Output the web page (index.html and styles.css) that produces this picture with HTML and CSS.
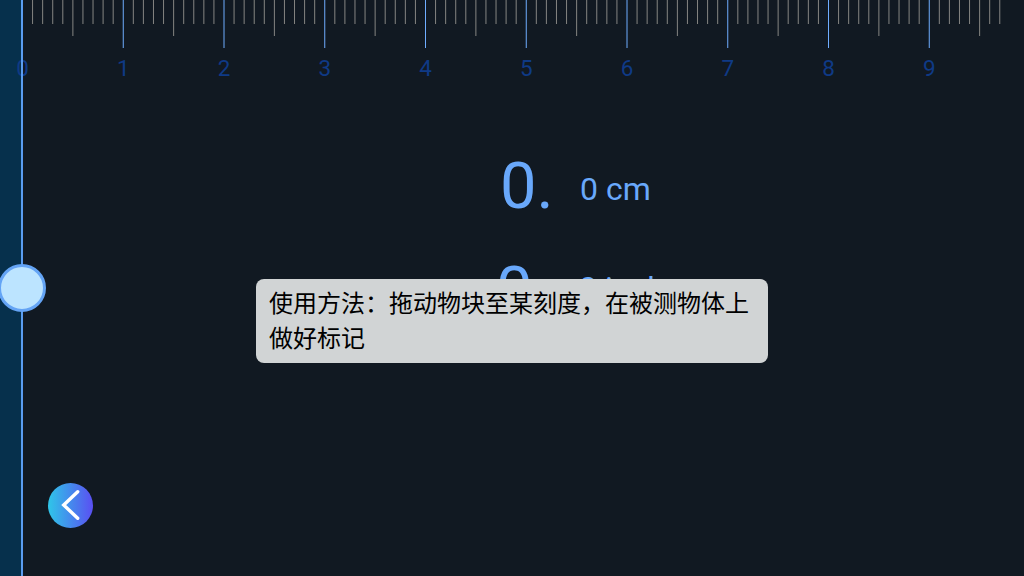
FILE: index.html
```html
<!DOCTYPE html>
<html lang="zh-CN">
<head>
    <meta charset="UTF-8">
    <meta name="viewport" content="width=device-width, initial-scale=1.0">
    <title>尺子</title>
    <link rel="stylesheet" href="styles.css">
</head>
<body>

<div class="app">
    <div class="marker-strip"></div>

    <svg class="ruler" id="ruler" width="1024" height="90" viewBox="0 0 1024 90"></svg>

    <div class="marker-line"></div>

    <div class="readouts">
        <div class="readout">
            <span class="readout-big">0.</span>
            <span class="readout-small">0 cm</span>
        </div>
        <div class="readout readout-inch">
            <span class="readout-big">0.</span>
            <span class="readout-small">0 inch</span>
        </div>
    </div>

    <div class="thumb"></div>

    <button class="back-button" type="button">
        <svg width="45" height="45" viewBox="0 0 45 45">
            <path d="M29.7 8.7 L15.7 22 L29.7 35.3" fill="none" stroke="#fff" stroke-width="3.4" stroke-linecap="round"/>
        </svg>
    </button>

    <div class="toast">使用方法：拖动物块至某刻度，在被测物体上做好标记</div>
</div>

<script>
    // ticks are drawn at fractional x, same as the 100.75px per cm of the scale
    const ruler = document.getElementById('ruler');
    const ns = 'http://www.w3.org/2000/svg';
    const startX = 22.5;
    const mmWidth = 10.075;

    for (let i = 1; i < 98; i++) {
        const x = startX + i * mmWidth;
        const line = document.createElementNS(ns, 'line');
        const isCm = i % 10 === 0;
        const isHalf = i % 5 === 0;
        line.setAttribute('x1', x);
        line.setAttribute('x2', x);
        line.setAttribute('y1', 0);
        line.setAttribute('y2', isCm ? 48 : isHalf ? 36 : 24);
        line.setAttribute('class', isCm ? 'tick tick-cm' : 'tick');
        ruler.appendChild(line);
    }

    for (let n = 0; n < 10; n++) {
        const label = document.createElementNS(ns, 'text');
        label.setAttribute('x', startX + 0.2 + n * mmWidth * 10);
        label.setAttribute('y', 76);
        label.setAttribute('class', 'tick-label');
        label.textContent = n;
        ruler.appendChild(label);
    }
</script>

</body>
</html>
```

FILE: styles.css
```css
* {
    box-sizing: border-box;
}
body {
    margin: 0;
    background: #111922;
    font-family: 'Roboto', 'Noto Sans CJK SC', sans-serif;
    overflow: hidden;
}
.app {
    position: relative;
    width: 1024px;
    height: 576px;
    overflow: hidden;
}
.marker-strip {
    position: absolute;
    left: 0;
    top: 0;
    width: 22px;
    height: 100%;
    background: #06304c;
}
.marker-line {
    position: absolute;
    left: 21px;
    top: 0;
    width: 2px;
    height: 100%;
    background: #5b9df0;
}
.ruler {
    display: block;
    position: relative;
}
.tick {
    stroke: #858582;
    stroke-width: 1;
}
.tick-cm {
    stroke: #6fadff;
}
.tick-label {
    fill: #0f3a86;
    font-size: 22.5px;
    text-anchor: middle;
}
.readouts {
    display: flex;
    flex-direction: column;
    gap: 8px;
    padding: 52px 0 0 500px;
    color: #69a8fb;
}
.readout {
    display: flex;
    align-items: flex-start;
    height: 96px;
}
.readout-big {
    width: 80px;
    font-size: 65px;
    line-height: 88px;
}
.readout-small {
    margin-top: 28px;
    font-size: 32px;
    line-height: 38px;
}
.readout-inch {
    margin-left: -4px;
}
.readout-inch .readout-big {
    width: 83px;
}
.readout-inch .readout-small {
    margin-top: 23px;
}
.thumb {
    position: absolute;
    left: -2px;
    top: 264px;
    width: 48px;
    height: 48px;
    border: 3px solid #64a4f5;
    border-radius: 50%;
    background: #bce4ff;
}
.back-button {
    position: absolute;
    left: 48px;
    top: 483px;
    width: 45px;
    height: 45px;
    padding: 0;
    border: none;
    border-radius: 50%;
    background: linear-gradient(90deg, #2fc6e8, #5a4ff2);
}
.back-button svg {
    display: block;
}
.toast {
    position: absolute;
    left: 256px;
    top: 279px;
    width: 512px;
    height: 84px;
    padding: 5px 13px;
    border-radius: 8px;
    background: #d1d4d5;
    color: #000;
    font-family: 'Noto Sans CJK SC', sans-serif;
    font-size: 24px;
    line-height: 35px;
}
```
